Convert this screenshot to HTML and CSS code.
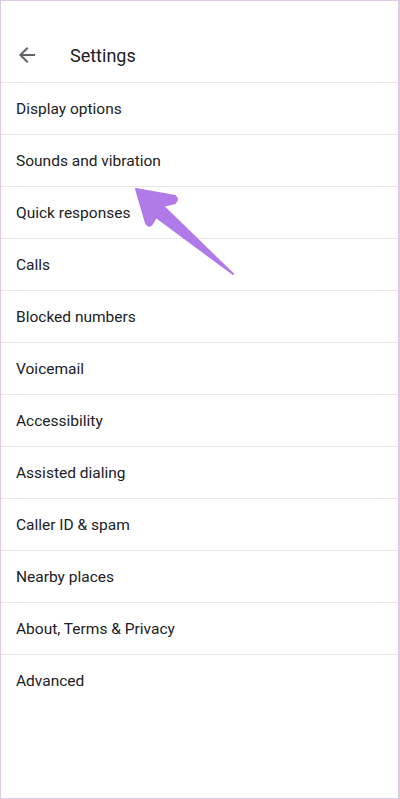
FILE: index.html
```html
<!DOCTYPE html>
<html lang="en">

<head>
    <meta charset="utf-8">
    <meta name="viewport" content="width=device-width, initial-scale=1.0">
    <title>Settings</title>
    <link rel="stylesheet" href="styles.css">
</head>

<body>
    <div class="ramme">
        <header class="topbar">
            <button class="tilbage" aria-label="Back">
                <svg width="24" height="24" viewBox="0 0 24 24">
                    <path d="M20 11H7.83l5.59-5.59L12 4l-8 8 8 8 1.41-1.41L7.83 13H20v-2z" fill="#5f6368" />
                </svg>
            </button>
            <h1>Settings</h1>
        </header>

        <ul class="liste">
            <li>Display options</li>
            <li>Sounds and vibration</li>
            <li>Quick responses</li>
            <li>Calls</li>
            <li>Blocked numbers</li>
            <li>Voicemail</li>
            <li>Accessibility</li>
            <li>Assisted dialing</li>
            <li>Caller ID &amp; spam</li>
            <li>Nearby places</li>
            <li>About, Terms &amp; Privacy</li>
            <li class="sidste">Advanced</li>
        </ul>

        <svg class="pil" width="400" height="799" viewBox="0 0 400 799">
            <path d="M136,189 L175,196 Q179,199 175,203 L163,206 L233,274 L156,217 L152,224 Q149,228 146,223 Z"
                fill="#b07ae9" stroke="#b07ae9" stroke-width="2" stroke-linejoin="round" />
        </svg>
    </div>
</body>

</html>
```

FILE: styles.css
```css
body {
    margin: 0;
    font-family: Roboto, "Noto Sans", sans-serif;
    color: #202124;
    background: #fff;
}

.ramme {
    position: relative;
    box-sizing: border-box;
    width: 400px;
    height: 799px;
    border: 1px solid #dccbe3;
    border-right-width: 2px;
    overflow: hidden;
}

.topbar {
    box-sizing: border-box;
    height: 82px;
    padding-top: 27px;
    display: flex;
    align-items: center;
    border-bottom: 1px solid #e6e6e6;
}

.tilbage {
    border: 0;
    background: none;
    padding: 0;
    margin-left: 14px;
    width: 24px;
    height: 24px;
}

.tilbage svg {
    display: block;
}

h1 {
    margin: 0 0 0 31px;
    font-size: 18px;
    font-weight: 400;
}

.liste {
    list-style: none;
    margin: 0;
    padding: 0;
}

.liste li {
    box-sizing: border-box;
    height: 52px;
    display: flex;
    align-items: center;
    padding-left: 15px;
    font-size: 15.5px;
    border-bottom: 1px solid #e6e6e6;
}

.liste li.sidste {
    border-bottom: 0;
}

.pil {
    position: absolute;
    left: -1px;
    top: -1px;
    pointer-events: none;
}
```
